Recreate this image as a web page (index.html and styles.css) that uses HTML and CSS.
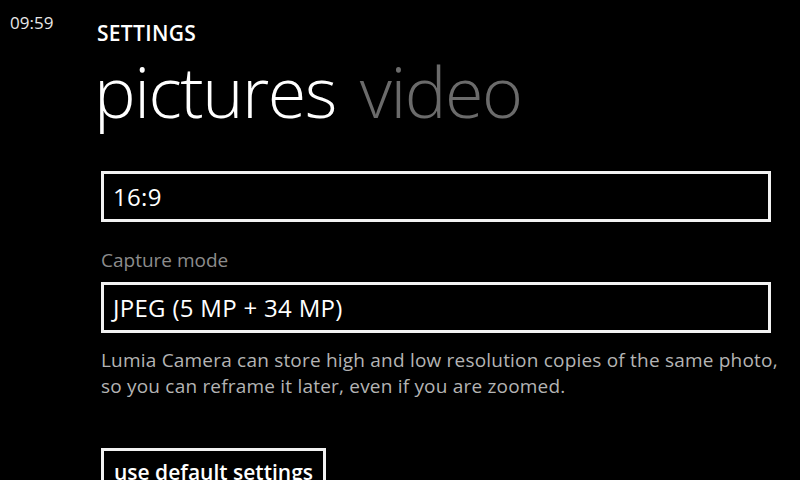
FILE: index.html
```html
<!DOCTYPE html>
<html>
<head>
<meta charset="utf-8">
<link rel="stylesheet" href="styles.css">
</head>
<body>
<div class="screen">
  <div class="status">
    <span class="time">09:59</span>
  </div>
  <div class="main">
    <div class="app-title">SETTINGS</div>
    <div class="pivot">
      <span class="pivot-item active">pictures</span>
      <span class="pivot-item">video</span>
    </div>
    <div class="content">
      <div class="picker"><span>16:9</span></div>
      <div class="label">Capture mode</div>
      <div class="picker"><span>JPEG (5 MP + 34 MP)</span></div>
      <p class="desc">Lumia Camera can store high and low resolution copies of the same photo, so you can reframe it later, even if you are zoomed.</p>
      <div class="button">use default settings</div>
    </div>
  </div>
</div>
</body>
</html>
```
FILE: styles.css
```css
html, body {
  margin: 0;
  padding: 0;
  background: #000;
  height: 100%;
  overflow: hidden;
}
.screen {
  display: flex;
  width: 800px;
  height: 480px;
  color: #fff;
  font-family: "Open Sans", "Noto Sans", sans-serif;
}
.status {
  width: 97px;
  flex: none;
  padding: 13px 0 0 10px;
  box-sizing: border-box;
  line-height: 20px;
}
.time {
  font-size: 17px;
  color: #e8e8e8;
}
.main {
  flex: 1;
  display: flex;
  flex-direction: column;
}
.app-title {
  margin-top: 19px;
  font-size: 21px;
  font-weight: 600;
  line-height: 28px;
  letter-spacing: 0.3px;
}
.pivot {
  display: flex;
  gap: 24px;
  margin-top: 4px;
  font-size: 70px;
  font-weight: 300;
  line-height: 80px;
  letter-spacing: -1.5px;
  margin-left: -3px;
}
.pivot-item {
  color: #6b6b6b;
}
.pivot-item.active {
  color: #fff;
}
.content {
  padding-left: 4px;
  margin-top: 40px;
  display: flex;
  flex-direction: column;
  align-items: flex-start;
}
.picker {
  width: 670px;
  height: 51px;
  box-sizing: border-box;
  border: 3px solid #f2f2f2;
  padding: 0 0 0 9px;
  display: flex;
  align-items: center;
  font-size: 24px;
  letter-spacing: 0.3px;
}
.label {
  margin-top: 25px;
  margin-bottom: 9px;
  font-size: 19px;
  line-height: 26px;
  color: #8c8c8c;
}
.desc {
  margin: 14px 0 0 0;
  width: 682px;
  font-size: 19px;
  line-height: 26px;
  letter-spacing: 0.2px;
  color: #b4b4b4;
}
.button {
  margin-top: 49px;
  border: 3px solid #f2f2f2;
  padding: 7px 10px 20px 10px;
  font-size: 21px;
  line-height: 28px;
  font-weight: 600;
}
```
